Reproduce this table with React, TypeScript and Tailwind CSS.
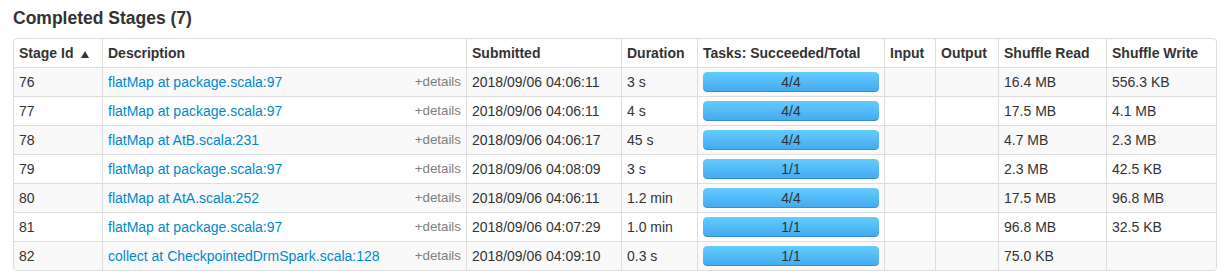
import React from "react";

type Row = {
  id: string;
  desc: string;
  submitted: string;
  duration: string;
  tasks: string;
  input: string;
  output: string;
  read: string;
  write: string;
};

const rows: Row[] = [
  { id: "76", desc: "flatMap at package.scala:97", submitted: "2018/09/06 04:06:11", duration: "3 s", tasks: "4/4", input: "", output: "", read: "16.4 MB", write: "556.3 KB" },
  { id: "77", desc: "flatMap at package.scala:97", submitted: "2018/09/06 04:06:11", duration: "4 s", tasks: "4/4", input: "", output: "", read: "17.5 MB", write: "4.1 MB" },
  { id: "78", desc: "flatMap at AtB.scala:231", submitted: "2018/09/06 04:06:17", duration: "45 s", tasks: "4/4", input: "", output: "", read: "4.7 MB", write: "2.3 MB" },
  { id: "79", desc: "flatMap at package.scala:97", submitted: "2018/09/06 04:08:09", duration: "3 s", tasks: "1/1", input: "", output: "", read: "2.3 MB", write: "42.5 KB" },
  { id: "80", desc: "flatMap at AtA.scala:252", submitted: "2018/09/06 04:06:11", duration: "1.2 min", tasks: "4/4", input: "", output: "", read: "17.5 MB", write: "96.8 MB" },
  { id: "81", desc: "flatMap at package.scala:97", submitted: "2018/09/06 04:07:29", duration: "1.0 min", tasks: "1/1", input: "", output: "", read: "96.8 MB", write: "32.5 KB" },
  { id: "82", desc: "collect at CheckpointedDrmSpark.scala:128", submitted: "2018/09/06 04:09:10", duration: "0.3 s", tasks: "1/1", input: "", output: "", read: "75.0 KB", write: "" },
];

const headers = [
  { label: "Stage Id", w: "w-[88px]" },
  { label: "Description", w: "w-[364px]" },
  { label: "Submitted", w: "w-[155px]" },
  { label: "Duration", w: "w-[76px]" },
  { label: "Tasks: Succeeded/Total", w: "w-[187px]" },
  { label: "Input", w: "w-[51px]" },
  { label: "Output", w: "w-[63px]" },
  { label: "Shuffle Read", w: "w-[108px]" },
  { label: "Shuffle Write", w: "w-[110px]" },
];

function ProgressBar({ text }: { text: string }) {
  return (
    <div className="relative h-[20px] rounded-[4px] bg-[#f5f5f5] overflow-hidden">
      <div className="h-full w-full rounded-[4px] bg-gradient-to-b from-[#64cbff] to-[#42aaef] shadow-[inset_0_-1px_0_rgba(0,0,0,0.15)]" />
      <span className="absolute inset-0 text-center leading-[20px] text-[#333]">{text}</span>
    </div>
  );
}

export default function App() {
  const cell = "px-[5px] py-[4px] leading-[20px] align-top text-left";
  return (
    <div
      className="bg-white text-[14px] text-[#333] pl-[13px]"
      style={{ fontFamily: '"Liberation Sans", Arial, Helvetica, sans-serif' }}
    >
      <h4 className="pt-[8px] mb-[10px] text-[17.5px] leading-[20px] font-bold text-[#333]">
        Completed Stages (7)
      </h4>
      <div className="w-[1204px] border border-[#ddd] rounded-[4px] overflow-hidden">
        <table className="w-full table-fixed border-separate border-spacing-0">
          <thead>
            <tr>
              {headers.map((h, i) => (
                <th
                  key={h.label}
                  className={`${h.w} ${cell} font-bold ${i > 0 ? "border-l border-[#ddd]" : ""}`}
                >
                  {h.label}
                  {i === 0 && (
                    <svg width="8" height="7" viewBox="0 0 8 7" className="inline-block ml-[8px] align-baseline">
                      <polygon points="4,0 8,7 0,7" fill="#333" />
                    </svg>
                  )}
                </th>
              ))}
            </tr>
          </thead>
          <tbody>
            {rows.map((r, idx) => {
              const bg = idx % 2 === 0 ? "bg-[#f9f9f9]" : "bg-white";
              const b = "border-t border-[#ddd]";
              const bl = "border-l border-[#ddd]";
              return (
                <tr key={r.id} className={bg}>
                  <td className={`${cell} ${b}`}>{r.id}</td>
                  <td className={`${cell} ${b} ${bl}`}>
                    <span className="float-right text-[13.33px] text-[#808080]">+details</span>
                    <a className="text-[#0088cc]">{r.desc}</a>
                  </td>
                  <td className={`${cell} ${b} ${bl}`}>{r.submitted}</td>
                  <td className={`${cell} ${b} ${bl}`}>{r.duration}</td>
                  <td className={`${cell} ${b} ${bl}`}>
                    <ProgressBar text={r.tasks} />
                  </td>
                  <td className={`${cell} ${b} ${bl}`}>{r.input}</td>
                  <td className={`${cell} ${b} ${bl}`}>{r.output}</td>
                  <td className={`${cell} ${b} ${bl}`}>{r.read}</td>
                  <td className={`${cell} ${b} ${bl}`}>{r.write}</td>
                </tr>
              );
            })}
          </tbody>
        </table>
      </div>
    </div>
  );
}
